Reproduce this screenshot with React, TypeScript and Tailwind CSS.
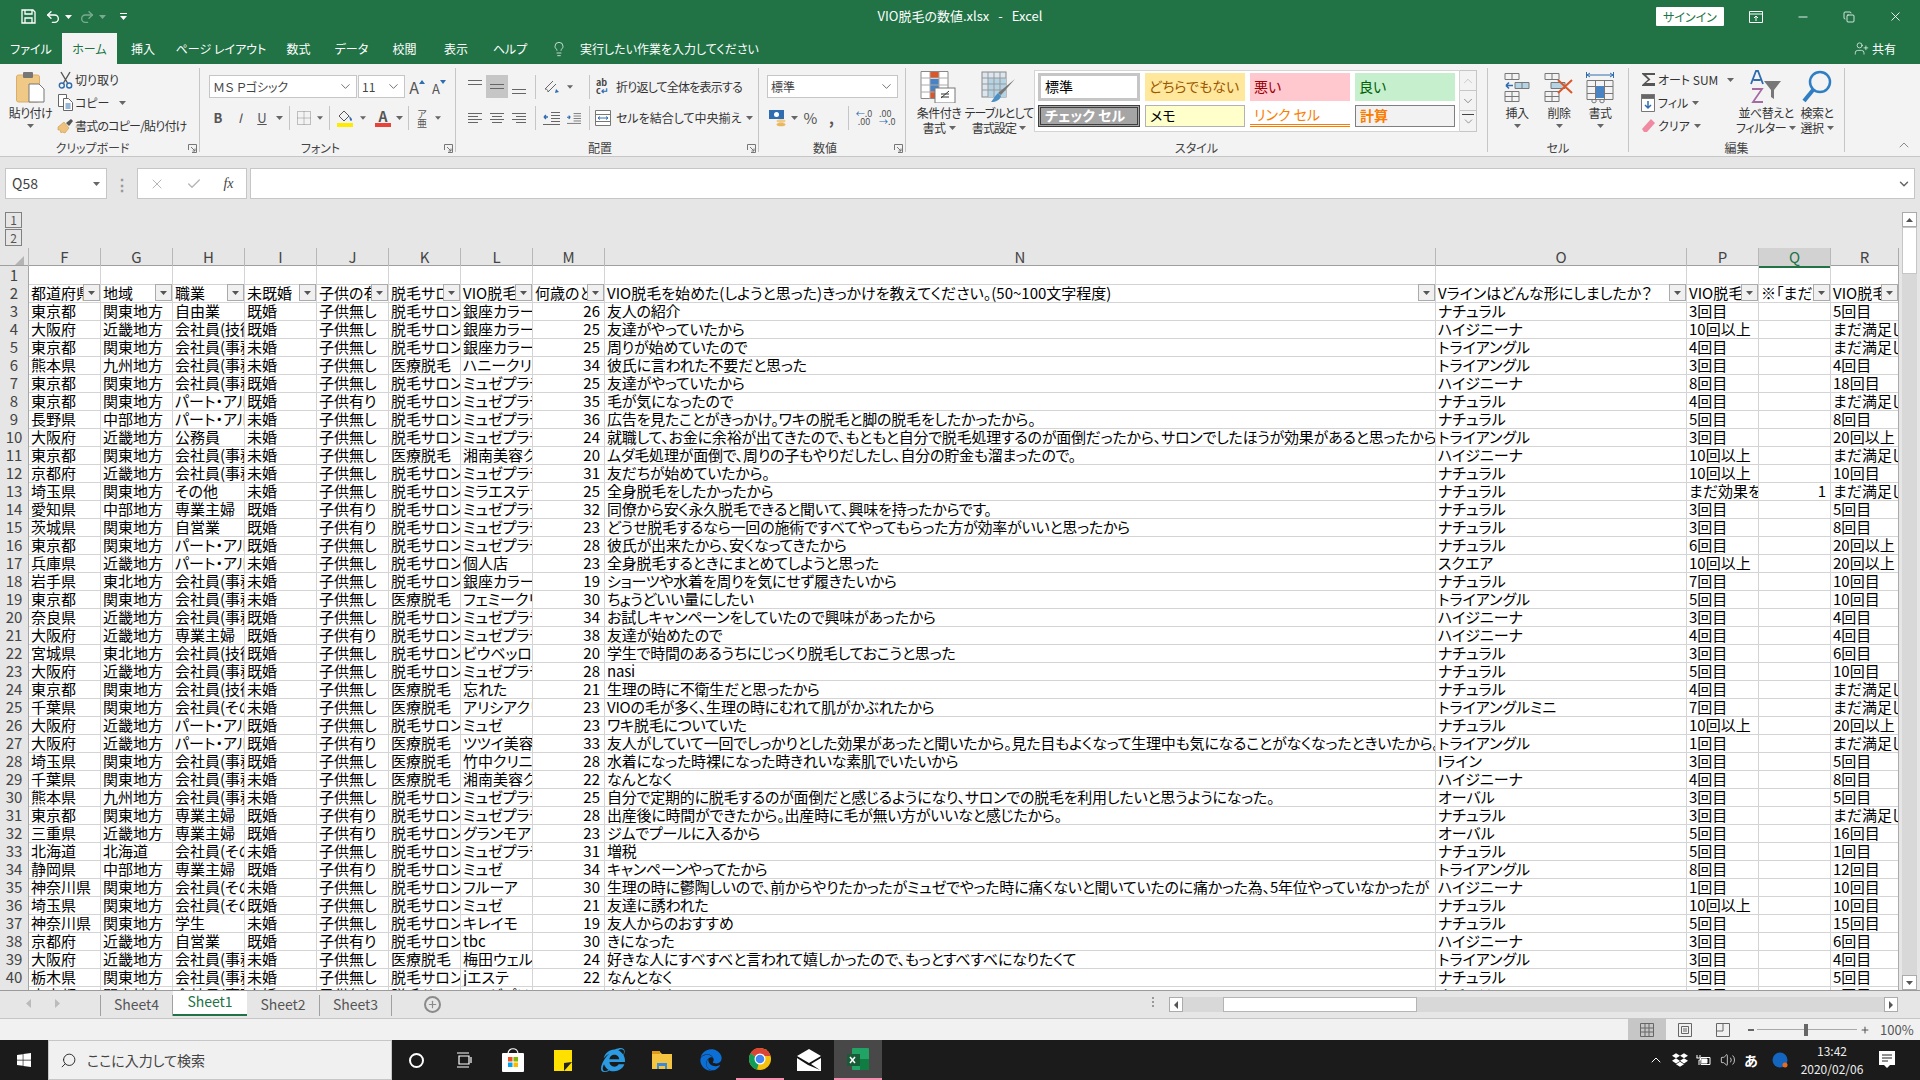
import React from 'react';
import { Undo2, Redo2, Minus, X, Copy, Lightbulb, UserPlus, Check, Plus, ChevronUp, ChevronDown, Volume2, Search } from 'lucide-react';
import { FaWindows, FaInternetExplorer, FaDropbox, FaEdge } from 'react-icons/fa';

const REGION: Record<string, string> = { 関: '関東地方', 近: '近畿地方', 九: '九州地方', 中: '中部地方', 東: '東北地方', 北: '北海道' };
const JOB: Record<string, string> = { j: '会社員(技術職)', m: '会社員(事務系)', o: '会社員(その他)', p: 'パート・アルバイト', h: '専業主婦' };
const STATE: Record<string, string> = { 既: '既婚', 未: '未婚' };
const CHILD: Record<string, string> = { 無: '子供無し', 有: '子供有り' };
const TYPE: Record<string, string> = { S: '脱毛サロン', M: '医療脱毛' };
const SHOP: Record<string, string> = { U: 'ミュゼプラチナム', G: '銀座カラー', Z: 'ミュゼ', C: '湘南美容クリニック' };
const SHAPE: Record<string, string> = { N: 'ナチュラル', H: 'ハイジニーナ', T: 'トライアングル', O: 'オーバル' };
const NOTYET = 'まだ満足していない';

const RAW = `東京都|関|自由業|既|無|S|G|26|友人の紹介|N|3回目||5回目
大阪府|近|j|既|無|S|銀座カラー、ミュゼ|25|友達がやっていたから|H|10回以上||X
東京都|関|m|未|無|S|G|25|周りが始めていたので|T|4回目||X
熊本県|九|m|未|無|M|ハニークリニック|34|彼氏に言われた不要だと思った|T|3回目||4回目
東京都|関|m|既|無|S|U|25|友達がやっていたから|H|8回目||18回目
東京都|関|p|既|有|S|U|35|毛が気になったので|N|4回目||X
長野県|中|p|未|無|S|U|36|広告を見たことがきっかけ。ワキの脱毛と脚の脱毛をしたかったから。|N|5回目||8回目
大阪府|近|公務員|未|無|S|U|24|就職して、お金に余裕が出てきたので、もともと自分で脱毛処理するのが面倒だったから、サロンでしたほうが効果があると思ったから。|T|3回目||20回以上
東京都|関|m|未|無|M|C|20|ムダ毛処理が面倒で、周りの子もやりだしたし、自分の貯金も溜まったので。|H|10回以上||X
京都府|近|m|未|無|S|U|31|友だちが始めていたから。|N|10回以上||10回目
埼玉県|関|その他|未|無|S|ミラエステシア|25|全身脱毛をしたかったから|N|まだ効果を感じていない|1|X
愛知県|中|h|既|有|S|U|32|同僚から安く永久脱毛できると聞いて、興味を持ったからです。|N|3回目||5回目
茨城県|関|自営業|既|有|S|U|23|どうせ脱毛するなら一回の施術ですべてやってもらった方が効率がいいと思ったから|N|3回目||8回目
東京都|関|p|既|無|S|U|28|彼氏が出来たから、安くなってきたから|N|6回目||20回以上
兵庫県|近|p|未|無|S|個人店|23|全身脱毛するときにまとめてしようと思った|スクエア|10回以上||20回以上
岩手県|東|m|未|無|S|G|19|ショーツや水着を周りを気にせず履きたいから|N|7回目||10回目
東京都|関|m|未|無|M|フェミークリニック|30|ちょうどいい量にしたい|T|5回目||10回目
奈良県|近|m|既|無|S|U|34|お試しキャンペーンをしていたので興味があったから|H|3回目||4回目
大阪府|近|h|既|有|S|U|38|友達が始めたので|H|4回目||4回目
宮城県|東|j|既|無|S|ビウベッロ|20|学生で時間のあるうちにじっくり脱毛しておこうと思った|N|3回目||6回目
大阪府|近|m|既|無|S|U|28|nasi|N|5回目||10回目
東京都|関|j|未|無|M|忘れた|21|生理の時に不衛生だと思ったから|N|4回目||X
千葉県|関|o|未|無|M|アリシアクリニック|23|VIOの毛が多く、生理の時にむれて肌がかぶれたから|トライアングルミニ|7回目||X
大阪府|近|p|既|無|S|Z|23|ワキ脱毛についていた|N|10回以上||20回以上
大阪府|近|p|既|有|M|ツツイ美容|33|友人がしていて一回でしっかりとした効果があったと聞いたから。見た目もよくなって生理中も気になることがなくなったときいたから。|T|1回目||X
埼玉県|関|m|既|無|M|竹中クリニック|28|水着になった時裸になった時きれいな素肌でいたいから|Iライン|3回目||5回目
千葉県|関|m|未|無|M|C|22|なんとなく|H|4回目||8回目
熊本県|九|m|未|無|S|U|25|自分で定期的に脱毛するのが面倒だと感じるようになり、サロンでの脱毛を利用したいと思うようになった。|O|3回目||5回目
東京都|関|h|既|有|S|U|28|出産後に時間ができたから。出産時に毛が無い方がいいなと感じたから。|N|3回目||X
三重県|近|h|既|有|S|グランモア|23|ジムでプールに入るから|O|5回目||16回目
北海道|北|o|未|無|S|U|31|増税|N|5回目||1回目
静岡県|中|h|既|有|S|Z|34|キャンペーンやってたから|T|8回目||12回目
神奈川県|関|o|未|無|S|フルーア|30|生理の時に鬱陶しいので、前からやりたかったがミュゼでやった時に痛くないと聞いていたのに痛かった為、5年位やっていなかったが|H|1回目||10回目
埼玉県|関|o|既|無|S|Z|21|友達に誘われた|N|10回以上||10回目
神奈川県|関|学生|未|無|S|キレイモ|19|友人からのおすすめ|N|5回目||15回目
京都府|近|自営業|既|有|S|tbc|30|きになった|H|3回目||6回目
大阪府|近|m|未|無|M|梅田ウェルエイジング|24|好きな人にすべすべと言われて嬉しかったので、もっとすべすべになりたくて|T|3回目||4回目
栃木県|関|m|未|無|S|jエステ|22|なんとなく|N|5回目||5回目
東京都|関|m|未|無|S|U|27|なんとなく|N|5回目||5回目`;

const ROWS = RAW.split('\n').map((line) => {
  const c = line.split('|');
  return [c[0], REGION[c[1]], JOB[c[2]] ?? c[2], STATE[c[3]], CHILD[c[4]], TYPE[c[5]], SHOP[c[6]] ?? c[6], c[7], c[8], SHAPE[c[9]] ?? c[9], c[10], c[11], c[12] === 'X' ? NOTYET : c[12]];
});

const HEADERS = ['都道府県', '地域', '職業', '未既婚', '子供の有無', '脱毛サロン', 'VIO脱毛', '何歳のとき', 'VIO脱毛を始めた(しようと思った)きっかけを教えてください。(50~100文字程度)', 'Vラインはどんな形にしましたか？', 'VIO脱毛', '※「まだ効果', 'VIO脱毛'];
const LETTERS = ['F', 'G', 'H', 'I', 'J', 'K', 'L', 'M', 'N', 'O', 'P', 'Q', 'R'];
const GRID = 'grid grid-cols-[29px_72px_72px_72px_72px_72px_72px_72px_72px_831px_251px_72px_72px_68px]';
const DOTS = 'bg-[radial-gradient(#dcdcdc_0.6px,transparent_0.6px)] bg-[length:4px_4px]';

const Caret = ({ color = '#666' }: { color?: string }) => (
  <svg width="7" height="4" viewBox="0 0 7 4"><path d="M0 0h7L3.5 4z" fill={color} /></svg>
);

const Launcher = () => (
  <svg width="9" height="9" viewBox="0 0 9 9" fill="none" stroke="#777"><path d="M.5 6V.5H8.5V8.5H4M3 3l4 4M7 4.5V7H4.5" /></svg>
);

const VSep = ({ c = 'h-[24px]' }: { c?: string }) => <div className={`w-px bg-[#c6c6c6] shrink-0 ${c}`} />;

const Lines = ({ rows, color = '#666' }: { rows: number[][]; color?: string }) => (
  <svg width="16" height="12" viewBox="0 0 16 12" stroke={color} strokeWidth="1">
    {rows.map((r, i) => <line key={i} x1={r[0]} x2={r[1]} y1={r[2] + 0.5} y2={r[2] + 0.5} />)}
  </svg>
);

const Group = ({ w, label, launcher, children }: { w: string; label: string; launcher?: boolean; children: React.ReactNode }) => (
  <div className={`flex h-full shrink-0 ${w}`}>
    <div className="flex-1 min-w-0 flex flex-col">
      <div className="h-[76px]">{children}</div>
      <div className="h-[16px] flex items-center text-[12px] text-[#444]">
        <div className="flex-1 text-center">{label}</div>
        {launcher && <div className="w-[14px] flex justify-center"><Launcher /></div>}
      </div>
    </div>
    <div className="w-px my-[4px] bg-[#c6c6c6]" />
  </div>
);

const Big = ({ c, icon, lines, caretInline }: { c: string; icon: React.ReactNode; lines: string[]; caretInline?: boolean }) => (
  <div className={`flex flex-col items-center shrink-0 text-[12px] leading-[15px] tracking-[-0.5px] text-[#333] ${c}`}>
    <div className="h-[32px] mt-[7px] mb-[2px] flex items-center justify-center">{icon}</div>
    {lines.map((l, i) => (
      <div key={l} className="whitespace-nowrap flex items-center gap-[3px]">
        {l}{caretInline && i === lines.length - 1 && <Caret />}
      </div>
    ))}
    {!caretInline && <div className="mt-[4px]"><Caret /></div>}
  </div>
);

const Combo = ({ c, text }: { c: string; text: string }) => (
  <div className={`h-[23px] bg-white border border-[#c6c6c6] flex items-center justify-between pl-[3px] pr-[3px] text-[12px] text-[#444] shrink-0 ${c}`}>
    <span>{text}</span>
    <ChevronDown size={15} strokeWidth={1.2} color="#444" />
  </div>
);

const PasteIcon = () => (
  <svg width="30" height="32" viewBox="0 0 30 32">
    <rect x="0.5" y="4" width="23" height="27" rx="2" fill="#f0c987" stroke="#d9ae68" />
    <rect x="7" y="1" width="10" height="6" rx="1" fill="#777" />
    <path d="M13 13h10l5 5v13H13z" fill="#fff" stroke="#777" />
  </svg>
);

const Scissors = () => (
  <svg width="15" height="18" viewBox="0 0 15 18" fill="none" strokeWidth="1.4">
    <path d="M3 1l6.5 11M12 1L5.500 12" stroke="#555" />
    <circle cx="3.800" cy="14.500" r="2.500" stroke="#2f6cb0" />
    <circle cx="11.200" cy="14.500" r="2.500" stroke="#2f6cb0" />
  </svg>
);

const CopyIcon = () => (
  <svg width="15" height="17" viewBox="0 0 15 17" fill="#fff" stroke="#666">
    <path d="M.5.500h8v12h-8z" />
    <path d="M5.500 4.500h5l4 4v8h-9z" />
    <path d="M7.500 10h5M7.500 12h5M7.500 14h5" stroke="#2f6cb0" />
  </svg>
);

const BrushIcon = () => (
  <svg width="17" height="16" viewBox="0 0 17 16">
    <path d="M1 9l6-5 5 6-4 5-3-1-1 1-1-3-2 0z" fill="#eec27c" stroke="#c99a52" strokeWidth=".6" />
    <path d="M9 5l5-4 2 2-4 5z" fill="#555" />
  </svg>
);

const AUp = ({ up }: { up: boolean }) => (
  <div className={`flex items-start leading-none text-[#555] ${up ? 'text-[16px]' : 'text-[13px] pt-[3px]'}`}>
    <span>A</span>
    <svg className={up ? 'mt-[1px]' : 'mt-[-2px]'} width="6" height="4" viewBox="0 0 6 4"><path d={up ? 'M0 4h6L3 0z' : 'M0 0h6L3 4z'} fill="#2f6cb0" /></svg>
  </div>
);

const BorderIcon = () => (
  <svg width="14" height="14" viewBox="0 0 14 14" fill="none" stroke="#888" strokeDasharray="1 1"><path d="M.5.500h13v13H.5zM7 .500v13M.5 7h13" /></svg>
);

const FillIcon = () => (
  <div className="flex flex-col items-center">
    <svg width="15" height="12" viewBox="0 0 15 12" fill="none"><path d="M6 1l5 5-5 5-5-5z" stroke="#555" /><path d="M11 6c2 1 3 3 3 4 0 1-2 1-2 0z" fill="#2f6cb0" /></svg>
    <div className="w-[16px] h-[4px] bg-[#ffeb00] mt-[1px]" />
  </div>
);

const FontColorIcon = () => (
  <div className="flex flex-col items-center font-bold text-[#555] text-[14px] leading-[12px]">
    <span>A</span>
    <div className="w-[16px] h-[4px] bg-[#e8423a] mt-[1px]" />
  </div>
);

const OrientIcon = () => (
  <svg width="18" height="16" viewBox="0 0 18 16" fill="none" stroke="#666"><path d="M2 10l8-8M5 13l8-8M2 10c2 0 3 1 3 3" /><path d="M13 10l3 3-4 1z" fill="#2f6cb0" stroke="none" /></svg>
);

const WrapIcon = () => (
  <div className="text-[9px] leading-[8px] text-[#444] font-bold w-[14px]">ab<br />c<span className="text-[#2f6cb0]">↵</span></div>
);

const MergeIcon = () => (
  <svg width="16" height="16" viewBox="0 0 16 16" fill="#fff" stroke="#777"><path d="M.5.500h15v15H.5zM.5 4.500h15M.5 11.500h15" /><path d="M3 8h10M3 8l2-1.500M3 8l2 1.500M13 8l-2-1.500M13 8l-2 1.500" stroke="#2f6cb0" /></svg>
);

const IndentIcon = ({ flip }: { flip?: boolean }) => (
  <svg width="17" height="13" viewBox="0 0 17 13" stroke="#666">
    <path d="M8 .500h9M8 3.500h9M8 6.500h9M8 9.500h9M0 12.500h17" />
    <path d={flip ? 'M0 5h4M4 5l-2-2M4 5l-2 2' : 'M5 5H1M1 5l2-2M1 5l2 2'} stroke="#2f6cb0" strokeWidth="1.4" fill="none" />
  </svg>
);

const CurrencyIcon = () => (
  <svg width="18" height="18" viewBox="0 0 18 18">
    <rect x="0" y="1" width="15" height="9" fill="#2f6cb0" />
    <circle cx="7.500" cy="5.500" r="2.500" fill="#fff" />
    <ellipse cx="12" cy="12" rx="4.500" ry="1.800" fill="#f0c987" />
    <ellipse cx="12" cy="15.500" rx="4.500" ry="1.800" fill="#eab75f" />
  </svg>
);

const CondIcon = () => (
  <svg width="38" height="32" viewBox="0 0 38 32" fill="#fff">
    <path d="M1 .500h27v27H1z" stroke="#888" />
    <rect x="10" y="1" width="9" height="6" fill="#d9572b" />
    <rect x="10" y="8" width="9" height="6" fill="#4a83c4" />
    <rect x="10" y="14" width="9" height="6" fill="#4a83c4" />
    <rect x="10" y="20" width="7" height="7" fill="#d9572b" />
    <path d="M1 7h27M1 14h27M1 21h27M10 1v27M19 1v27" stroke="#aaa" fill="none" />
    <rect x="15" y="17" width="20" height="15" fill="#fff" stroke="#777" />
    <path d="M21 27l8-7M21 23h8M21 26h8" stroke="#333" fill="none" />
  </svg>
);

const TableIcon = () => (
  <svg width="36" height="33" viewBox="0 0 36 33" fill="none">
    <rect x="1" y="1" width="24" height="25" fill="#dce6f0" stroke="#888" />
    <rect x="7" y="7" width="18" height="19" fill="#b4d3e4" />
    <path d="M1 7h24M1 13h24M1 19h24M7 1v25M13 1v25M19 1v25" stroke="#999" />
    <path d="M34 8L20 24l-3-2z" fill="#777" />
    <path d="M17 22l3 3c-1 4-5 6-10 6 2-2 3-5 7-9z" fill="#4a90c4" />
  </svg>
);

const InsertIcon = () => (
  <svg width="26" height="30" viewBox="0 0 26 30" fill="none" stroke="#777">
    <path d="M1 1.500h14v6H1zM8 1.500v6M1 19.500h14v10H1zM8 19.500v10M1 24.500h14" />
    <path d="M11 10.500h14v6H11zM18 10.500v6" fill="#b4d3e4" />
    <path d="M9 13.500H2M2 13.500l3-3M2 13.500l3 3" stroke="#2f6cb0" strokeWidth="1.600" />
  </svg>
);

const DeleteIcon = () => (
  <svg width="30" height="30" viewBox="0 0 30 30" fill="none" stroke="#777">
    <path d="M1 1.500h14v6H1zM8 1.500v6M1 19.500h14v10H1zM8 19.500v10M1 24.500h14" />
    <path d="M7 10.500h14v6H7z" fill="#b4d3e4" />
    <path d="M14 8l14 13M28 8L14 21" stroke="#d9572b" strokeWidth="2" />
  </svg>
);

const FormatIcon = () => (
  <svg width="28" height="34" viewBox="0 0 28 34" fill="none" stroke="#777">
    <path d="M1 5h26M1 5l3-2M1 5l3 2M27 5l-3-2M27 5l-3 2M.5 2v6M27.500 2v6" stroke="#2f6cb0" />
    <path d="M1 10.500h26v19H1zM9.500 10.500v19M18.500 10.500v19M1 16.500h26M1 23.500h26" />
    <rect x="10" y="16" width="8" height="12" fill="#4a83c4" stroke="none" />
    <path d="M6 30v2c0 1 4 1 4 0v-2M14 30v2c0 1 4 1 4 0v-2" />
  </svg>
);

const SigmaIcon = () => <svg width="15" height="15" viewBox="0 0 15 15"><path d="M14 4V1H1v1l6 5.500L1 13v1h13v-3H5l4.500-3.500L5 3h9z" fill="#555" /></svg>;

const FillDown = () => (
  <svg width="14" height="18" viewBox="0 0 14 18" fill="#fff" stroke="#777"><path d="M.5.500h13v17H.5z" /><path d="M.5.500h13v4H.5z" fill="#666" /><path d="M7 7v7M4 11l3 3 3-3" stroke="#2f6cb0" strokeWidth="1.500" fill="none" /></svg>
);

const Eraser = () => (
  <svg width="15" height="15" viewBox="0 0 15 15"><path d="M10 1l4 4-8 9H3l-2-3z" fill="#ef8aa0" /></svg>
);

const SortIcon = () => (
  <svg width="32" height="34" viewBox="0 0 32 34">
    <path d="M1 14L6 1h2l5 13M3.500 10h7" stroke="#2f6cb0" strokeWidth="1.800" fill="none" />
    <path d="M2 19h10L3 32h10" stroke="#a56aa0" strokeWidth="1.800" fill="none" />
    <path d="M14 11h17l-7 9v9l-3-2v-7z" fill="#777" />
  </svg>
);

const FindIcon = () => (
  <svg width="30" height="34" viewBox="0 0 30 34" fill="none" stroke="#2f7ec4"><circle cx="18" cy="12" r="10" strokeWidth="2.500" /><path d="M11 20L2 31" strokeWidth="4" /></svg>
);

const Clip = ({ icon, children }: { icon: React.ReactNode; children: React.ReactNode }) => (
  <div className="h-[23px] flex items-center text-[12px] text-[#333] whitespace-nowrap">
    <div className="w-[20px] flex justify-center shrink-0">{icon}</div>
    {children}
  </div>
);

const StyleCell = ({ c, children }: { c: string; children: string }) => (
  <div className={`flex items-center pl-[4px] pb-[2px] text-[14px] leading-[16px] whitespace-nowrap overflow-hidden ${c}`}>{children}</div>
);

const TitleBar = () => (
  <div className="h-[33px] bg-[#217346] grid grid-cols-[1fr_auto_1fr] items-center text-white shrink-0">
    <div className="flex items-center pl-[21px]">
      <svg width="15" height="15" viewBox="0 0 15 15" fill="none" stroke="#fff" strokeWidth="1.300"><path d="M1 1h11l2 2v11H1zM4 1v4h7V1M4 14V9h7v5" /></svg>
      <div className="ml-[9px]"><Undo2 size={16} strokeWidth={2} /></div>
      <div className="ml-[4px]"><Caret color="#fff" /></div>
      <div className="ml-[7px] opacity-40"><Redo2 size={16} strokeWidth={2} /></div>
      <div className="ml-[4px] opacity-40"><Caret color="#fff" /></div>
      <div className="ml-[14px] flex flex-col items-center gap-[2px]"><div className="w-[7px] h-px bg-white" /><Caret color="#fff" /></div>
    </div>
    <div className="text-[13px] pb-[2px]">VIO脱毛の数値.xlsx<span className="mx-[9px]">-</span>Excel</div>
    <div className="flex items-center justify-end">
      <div className="w-[68px] h-[19px] bg-white rounded-[1px] text-[#217346] text-[12px] flex items-center justify-center">サインイン</div>
      <svg className="ml-[25px]" width="14" height="12" viewBox="0 0 14 12" fill="none" stroke="#fff"><path d="M.5.500h13v11H.5zM.5 3h13M7 10V5M5 7l2-2 2 2" /></svg>
      <div className="ml-[33px]"><Minus size={14} strokeWidth={1.500} /></div>
      <div className="ml-[33px]"><Copy size={12} strokeWidth={1.600} /></div>
      <div className="ml-[33px] mr-[17px]"><X size={15} strokeWidth={1.400} /></div>
    </div>
  </div>
);

const TABS = [
  ['ファイル', 'w-[62px]'], ['ホーム', 'w-[55px]'], ['挿入', 'w-[52px]'], ['ページ レイアウト', 'w-[104px]'], ['数式', 'w-[51px]'],
  ['データ', 'w-[55px]'], ['校閲', 'w-[51px]'], ['表示', 'w-[52px]'], ['ヘルプ', 'w-[56px]'],
];

const TabBar = () => (
  <div className="h-[31px] bg-[#217346] flex items-stretch text-white text-[12px] shrink-0">
    {TABS.map(([t, w]) => (
      <div key={t} className={`${w} flex items-center justify-center ${t === 'ホーム' ? 'bg-[#f3f3f3] text-[#217346]' : ''}`}>{t}</div>
    ))}
    <div className="ml-[13px] flex items-center"><Lightbulb size={16} strokeWidth={1.100} /></div>
    <div className="ml-[13px] flex items-center">実行したい作業を入力してください</div>
    <div className="ml-auto mr-[24px] flex items-center gap-[3px]"><UserPlus size={15} strokeWidth={1.100} />共有</div>
  </div>
);

const Ribbon = () => (
  <div className="h-[93px] bg-[#f3f3f3] border-b border-[#c6c6c6] flex shrink-0 relative">
    <Group w="w-[200px]" label="クリップボード" launcher>
      <div className="flex">
        <Big c="w-[55px] ml-[3px] mr-[-3px]" icon={<PasteIcon />} lines={['貼り付け']} />
        <div className="pt-[4px]">
          <Clip icon={<Scissors />}>切り取り</Clip>
          <Clip icon={<CopyIcon />}>コピー<span className="ml-[10px]"><Caret /></span></Clip>
          <Clip icon={<BrushIcon />}><span className="tracking-[-0.8px]">書式のコピー/貼り付け</span></Clip>
        </div>
      </div>
    </Group>

    <Group w="w-[256px]" label="フォント" launcher>
      <div className="flex items-center pt-[11px] pl-[9px]">
        <Combo c="w-[148px]" text="ＭＳ Ｐゴシック" />
        <Combo c="w-[47px] ml-[1px]" text="11" />
        <div className="w-[22px] ml-[1px] flex justify-center"><AUp up /></div>
        <div className="w-[22px] flex justify-center"><AUp up={false} /></div>
      </div>
      <div className="flex items-center pl-[7px] mt-[8px] h-[24px] text-[#555]">
        <div className="w-[22px] text-center font-bold text-[13px]">B</div>
        <div className="w-[22px] text-center italic text-[13px]">I</div>
        <div className="w-[22px] text-center underline text-[13px]">U</div>
        <div className="w-[12px] flex justify-center"><Caret /></div>
        <div className="w-[4px]" /><VSep />
        <div className="w-[27px] flex justify-center"><BorderIcon /></div>
        <div className="w-[6px] flex justify-center"><Caret /></div>
        <div className="w-[6px]" /><VSep />
        <div className="w-[30px] flex justify-center"><FillIcon /></div>
        <div className="w-[6px] flex justify-center"><Caret /></div>
        <div className="w-[6px]" />
        <div className="w-[22px] flex justify-center"><FontColorIcon /></div>
        <div className="w-[10px] flex justify-center"><Caret /></div>
        <div className="w-[4px]" /><VSep />
        <div className="w-[26px] text-center text-[10px] leading-[9px]">ア<br />亜</div>
        <div className="w-[6px] flex justify-center"><Caret /></div>
      </div>
    </Group>

    <Group w="w-[303px]" label="配置" launcher>
      <div className="flex items-center pt-[11px] pl-[8px] h-[34px]">
        <div className="w-[22px] h-[23px] flex justify-center items-start pt-[3px]"><Lines rows={[[1, 15, 2], [1, 15, 6]]} /></div>
        <div className="w-[22px] h-[23px] flex justify-center items-center bg-[#c6c6c6]"><Lines rows={[[1, 15, 3], [1, 15, 7]]} /></div>
        <div className="w-[22px] h-[23px] flex justify-center items-end pb-[2px]"><Lines rows={[[1, 15, 5], [1, 15, 9]]} /></div>
        <div className="w-[5px]" /><VSep />
        <div className="w-[31px] flex justify-center"><OrientIcon /></div>
        <div className="w-[6px] flex justify-center"><Caret /></div>
        <div className="w-[16px]" /><VSep />
        <div className="w-[26px] flex justify-center"><WrapIcon /></div>
        <div className="text-[12px] text-[#333] whitespace-nowrap tracking-[-0.8px]">折り返して全体を表示する</div>
      </div>
      <div className="flex items-center pl-[8px] mt-[8px] h-[24px]">
        <div className="w-[22px] flex justify-center"><Lines rows={[[1, 15, 1], [1, 11, 4], [1, 15, 7], [1, 11, 10]]} /></div>
        <div className="w-[22px] flex justify-center"><Lines rows={[[1, 15, 1], [3, 13, 4], [1, 15, 7], [3, 13, 10]]} /></div>
        <div className="w-[22px] flex justify-center"><Lines rows={[[1, 15, 1], [5, 15, 4], [1, 15, 7], [5, 15, 10]]} /></div>
        <div className="w-[5px]" /><VSep />
        <div className="w-[31px] flex justify-center"><IndentIcon /></div>
        <div className="w-[14px] flex justify-center"><IndentIcon flip /></div>
        <div className="w-[8px]" /><VSep />
        <div className="w-[26px] flex justify-center"><MergeIcon /></div>
        <div className="text-[12px] text-[#333] whitespace-nowrap">セルを結合して中央揃え</div>
        <div className="ml-[5px]"><Caret /></div>
      </div>
    </Group>

    <Group w="w-[147px]" label="数値" launcher>
      <div className="pt-[11px] pl-[8px]"><Combo c="w-[131px]" text="標準" /></div>
      <div className="flex items-center pl-[8px] mt-[8px] h-[24px] text-[#555]">
        <div className="w-[22px] flex justify-center"><CurrencyIcon /></div>
        <div className="w-[10px] flex justify-center"><Caret /></div>
        <div className="w-[23px] text-center text-[15px]">%</div>
        <div className="w-[19px] text-center text-[15px] font-bold">,</div>
        <div className="w-[7px]" /><VSep />
        <div className="w-[30px] text-[9px] leading-[8px] text-center"><span className="text-[#2f6cb0]">←</span>.0<br />.00</div>
        <div className="w-[12px] text-[9px] leading-[8px] text-center whitespace-nowrap">.00<br /><span className="text-[#2f6cb0]">→</span>.0</div>
      </div>
    </Group>

    <Group w="w-[582px]" label="スタイル">
      <div className="flex pl-[3px]">
        <Big c="w-[60px]" icon={<CondIcon />} lines={['条件付き', '書式']} caretInline />
        <Big c="w-[60px] tracking-[-0.9px]" icon={<TableIcon />} lines={['テーブルとして', '書式設定']} caretInline />
        <div className="ml-[5px] mt-[6px] w-[426px] h-[62px] bg-white border border-[#d4d4d4] grid grid-cols-[102px_100px_100px_100px] grid-rows-[28px_22px] gap-x-[5px] gap-y-[4px] pl-[3px] pt-[2px]">
          <StyleCell c="border-[3px] border-[#c6c6c6] text-black">標準</StyleCell>
          <StyleCell c="bg-[#ffe79c] text-[#9c5700]">どちらでもない</StyleCell>
          <StyleCell c="bg-[#ffc7ce] text-[#9c0006]">悪い</StyleCell>
          <StyleCell c="bg-[#c6efce] text-[#006100]">良い</StyleCell>
          <StyleCell c="bg-[#a5a5a5] border-[3px] border-double border-[#3f3f3f] text-white font-bold">チェック セル</StyleCell>
          <StyleCell c="bg-[#ffffcc] border border-[#b2b2b2] text-black">メモ</StyleCell>
          <StyleCell c="border-b-[3px] border-double border-[#fa7d00] text-[#fa7d00]">リンク セル</StyleCell>
          <StyleCell c="bg-[#f2f2f2] border border-[#7f7f7f] text-[#fa7d00] font-bold">計算</StyleCell>
        </div>
        <div className="mt-[6px] w-[17px] h-[62px] flex flex-col border border-l-0 border-[#c6c6c6] bg-[#f3f3f3]">
          <div className="h-[20px] flex items-center justify-center border-b border-[#c6c6c6]"><ChevronUp size={14} strokeWidth={1} color="#aaa" /></div>
          <div className="h-[20px] flex items-center justify-center border-b border-[#c6c6c6]"><ChevronDown size={14} strokeWidth={1} color="#444" /></div>
          <div className="flex-1 flex flex-col items-center justify-center">
            <div className="w-[12px] h-px bg-[#444]" />
            <ChevronDown size={13} strokeWidth={1} color="#444" />
          </div>
        </div>
      </div>
    </Group>

    <Group w="w-[141px]" label="セル">
      <div className="flex pl-[8px]">
        <Big c="w-[42px]" icon={<InsertIcon />} lines={['挿入']} />
        <Big c="w-[42px]" icon={<DeleteIcon />} lines={['削除']} />
        <Big c="w-[40px]" icon={<FormatIcon />} lines={['書式']} />
      </div>
    </Group>

    <Group w="w-[216px]" label="編集">
      <div className="flex">
        <div className="w-[111px] pt-[4px] pl-[9px]">
          <Clip icon={<SigmaIcon />}>オート SUM<span className="ml-[9px]"><Caret /></span></Clip>
          <Clip icon={<FillDown />}>フィル<span className="ml-[4px]"><Caret /></span></Clip>
          <Clip icon={<Eraser />}>クリア<span className="ml-[4px]"><Caret /></span></Clip>
        </div>
        <Big c="w-[52px]" icon={<SortIcon />} lines={['並べ替えと', 'フィルター']} caretInline />
        <Big c="w-[50px]" icon={<FindIcon />} lines={['検索と', '選択']} caretInline />
      </div>
    </Group>

    <div className="ml-auto mr-[8px] self-end mb-[3px]"><ChevronUp size={16} strokeWidth={1} color="#555" /></div>
  </div>
);

const FormulaBar = () => (
  <div className={`h-[43px] bg-[#e6e6e6] flex pt-[11px] pb-px shrink-0 ${DOTS}`}>
    <div className="ml-[5px] w-[102px] bg-white border border-[#c6c6c6] flex items-center justify-between px-[6px] text-[14px] text-[#444]">
      Q58<Caret />
    </div>
    <div className="w-[30px] flex items-center justify-center text-[#999] text-[16px] font-bold leading-none">⋮</div>
    <div className="w-[110px] bg-white border border-[#c6c6c6] flex items-center">
      <div className="w-[38px] flex justify-center"><X size={16} strokeWidth={1.500} color="#b5b5b5" /></div>
      <div className="w-[35px] flex justify-center"><Check size={16} strokeWidth={2} color="#b5b5b5" /></div>
      <div className="w-[35px] text-center italic font-['Liberation_Serif',serif] text-[14px] text-[#444]">fx</div>
    </div>
    <div className="ml-[3px] w-[1665px] bg-white border border-[#c6c6c6] flex items-center justify-end pr-[3px]">
      <ChevronDown size={14} strokeWidth={2.500} color="#666" />
    </div>
  </div>
);

const Filter = () => (
  <div className="w-[17px] h-[17px] shrink-0 bg-[#f0f0f0] border border-[#ababab] flex items-center justify-center"><Caret color="#555" /></div>
);

const Sheet = () => (
  <div className="flex-1 flex flex-col min-h-0 min-w-0">
    <div className="h-[48px] shrink-0 pl-[5px] pt-[12px]">
      <div className="w-[17px] h-[16px] border border-[#808080] text-[12px] leading-[14px] text-center text-[#555]">1</div>
      <div className="w-[17px] h-[17px] mt-px border border-[#808080] text-[12px] leading-[15px] text-center text-[#555]">2</div>
    </div>
    <div className="flex-1 min-h-0 overflow-hidden border-r border-[#ababab] text-[15px] leading-[18px]">
      <div className={`${GRID} h-[18px] border-b border-[#9f9f9f] text-[#444]`}>
        <div className="border-r border-[#b8b8b8] flex items-end justify-end pr-[4px] pb-[3px]">
          <div className="w-0 h-0 border-l-[9px] border-l-transparent border-b-[9px] border-b-[#b4b4b4]" />
        </div>
        {LETTERS.map((l) => (
          <div key={l} className={`text-center border-r border-[#b8b8b8] ${l === 'Q' ? 'bg-[#d2d2d2] text-[#217346] border-b-2 border-b-[#217346]' : ''}`}>{l}</div>
        ))}
      </div>
      <div className={`${GRID} h-[18px] bg-white`}>
        <div className="bg-[#e6e6e6] text-center text-[#444] border-r border-b border-[#a6a6a6]">1</div>
        {LETTERS.map((l) => <div key={l} className="border-r border-b border-[#d4d4d4]" />)}
      </div>
      <div className={`${GRID} h-[18px] bg-white`}>
        <div className="bg-[#e6e6e6] text-center text-[#444] border-r border-b border-[#a6a6a6]">2</div>
        {HEADERS.map((h, j) => (
          <div key={j} className="border-r border-b border-[#d4d4d4] flex min-w-0">
            <div className="flex-1 min-w-0 overflow-hidden whitespace-nowrap pl-[2px] text-black">{h}</div>
            <Filter />
          </div>
        ))}
      </div>
      {ROWS.map((row, i) => (
        <div key={i} className={`${GRID} h-[18px] bg-white`}>
          <div className="bg-[#e6e6e6] text-center text-[#444] border-r border-b border-[#a6a6a6]">{i + 3}</div>
          {row.map((v, j) => (
            <div key={j} className={`border-r border-b border-[#d4d4d4] overflow-hidden whitespace-nowrap text-black ${j === 7 || j === 11 ? 'text-right pr-[4px]' : 'pl-[2px]'} ${j === 8 ? 'tracking-[-0.22px]' : ''}`}>{v}</div>
          ))}
        </div>
      ))}
    </div>
  </div>
);

const VScroll = () => (
  <div className="w-[21px] shrink-0 pl-[3px] pr-[3px] pt-[12px] flex flex-col">
    <div className="h-[15px] bg-white border border-[#ababab] flex items-center justify-center">
      <svg width="7" height="4" viewBox="0 0 7 4"><path d="M0 4h7L3.500 0z" fill="#555" /></svg>
    </div>
    <div className="flex-1 bg-[#d8d8d8] flex flex-col">
      <div className="h-[47px] bg-white border border-[#c6c6c6]" />
    </div>
    <div className="h-[15px] bg-white border border-[#ababab] flex items-center justify-center"><Caret color="#555" /></div>
  </div>
);

const SheetTabs = () => (
  <div className={`h-[28px] bg-[#e6e6e6] border-t border-[#9b9b9b] flex items-start shrink-0 text-[14px] text-[#555] ${DOTS}`}>
    <div className="w-[100px] h-[25px] flex items-center">
      <div className="ml-[26px]"><svg width="5" height="9" viewBox="0 0 5 9"><path d="M5 0v9L0 4.500z" fill="#bbb" /></svg></div>
      <div className="ml-[24px]"><svg width="5" height="9" viewBox="0 0 5 9"><path d="M0 0v9l5-4.500z" fill="#bbb" /></svg></div>
    </div>
    <div className="w-[73px] h-[21px] mt-[4px] pb-[2px] border-x border-[#a0a0a0] flex items-center justify-center">Sheet4</div>
    <div className="w-[74px] h-[25px] pb-[2px] bg-white border-b-2 border-[#217346] text-[#217346] flex items-center justify-center">Sheet1</div>
    <div className="w-[73px] h-[21px] mt-[4px] pb-[2px] border-r border-[#a0a0a0] flex items-center justify-center">Sheet2</div>
    <div className="w-[72px] h-[21px] mt-[4px] pb-[2px] border-r border-[#a0a0a0] flex items-center justify-center">Sheet3</div>
    <div className="ml-[32px] mt-[5px] w-[17px] h-[17px] rounded-full border-2 border-[#8a8a8a] flex items-center justify-center"><Plus size={11} strokeWidth={2.500} color="#8a8a8a" /></div>
    <div className="ml-[711px] mt-[6px] flex flex-col gap-[2px]">
      <div className="w-[2px] h-[2px] bg-[#999]" /><div className="w-[2px] h-[2px] bg-[#999]" /><div className="w-[2px] h-[2px] bg-[#999]" />
    </div>
    <div className="ml-[15px] mt-[6px] flex h-[15px] w-[729px]">
      <div className="w-[14px] bg-white border border-[#ababab] flex items-center justify-center"><svg width="4" height="8" viewBox="0 0 4 8"><path d="M4 0v8L0 4z" fill="#555" /></svg></div>
      <div className="flex-1 bg-[#d8d8d8] flex pl-[40px]"><div className="w-[194px] bg-white border border-[#b4b4b4]" /></div>
      <div className="w-[14px] bg-white border border-[#ababab] flex items-center justify-center"><svg width="4" height="8" viewBox="0 0 4 8"><path d="M0 0v8l4-4z" fill="#555" /></svg></div>
    </div>
  </div>
);

const StatusBar = () => (
  <div className="h-[22px] bg-[#f1f1f1] border-t border-[#c6c6c6] flex items-stretch shrink-0 text-[#555]">
    <div className="w-[1628px]" />
    <div className="w-[38px] bg-[#c6c6c6] flex items-center justify-center">
      <svg width="14" height="14" viewBox="0 0 14 14" fill="none" stroke="#666"><path d="M.5.500h13v13H.5zM5 .500v13M9 .500v13M.5 5h13M.5 9h13" /></svg>
    </div>
    <div className="w-[38px] flex items-center justify-center">
      <svg width="14" height="14" viewBox="0 0 14 14" fill="none" stroke="#666"><path d="M.5.500h13v13H.5zM3.500 3.500h7v7h-7zM5 6h4M5 8h4" /></svg>
    </div>
    <div className="w-[38px] flex items-center justify-center">
      <svg width="14" height="14" viewBox="0 0 14 14" fill="none" stroke="#666"><path d="M.5.500h13v13H.5zM7 .500V8H.5" /></svg>
    </div>
    <div className="ml-[3px] w-[12px] flex items-center justify-center"><div className="w-[6px] h-[2px] bg-[#666]" /></div>
    <div className="w-[100px] flex items-center relative">
      <div className="w-full h-px bg-[#aaa]" />
      <div className="absolute left-[47px] w-[4px] h-[12px] bg-[#666]" />
    </div>
    <div className="ml-[2px] w-[12px] flex items-center justify-center"><Plus size={10} strokeWidth={2.500} /></div>
    <div className="ml-[9px] text-[13px] flex items-center">100%</div>
  </div>
);

const TaskSlot = ({ c, children }: { c: string; children: React.ReactNode }) => (
  <div className={`h-full flex items-center justify-center shrink-0 ${c}`}>{children}</div>
);

const Taskbar = () => (
  <div className="h-[40px] bg-[#1b1b1b] flex items-stretch shrink-0 text-white">
    <TaskSlot c="w-[48px]"><FaWindows size={16} color="#fff" /></TaskSlot>
    <div className="w-[344px] bg-[#f0f0f0] border border-[#c6c6c6] flex items-center pl-[11px] text-[14px] text-[#444]">
      <Search size={17} strokeWidth={1.300} color="#222" className="-scale-x-100" />
      <span className="ml-[10px]">ここに入力して検索</span>
    </div>
    <TaskSlot c="w-[48px]"><div className="w-[15px] h-[15px] rounded-full border-[2.500px] border-white" /></TaskSlot>
    <TaskSlot c="w-[48px]">
      <svg width="16" height="16" viewBox="0 0 16 16" fill="none" stroke="#fff" strokeWidth="1.200"><path d="M3 4h10v8H3zM1 1h12M1 15h12M15 5v6" /></svg>
    </TaskSlot>
    <TaskSlot c="w-[50px]">
      <svg width="24" height="26" viewBox="0 0 24 26">
        <path d="M7 7c0-7 10-7 10 0" fill="none" stroke="#fff" strokeWidth="1.200" />
        <rect x="1" y="6" width="22" height="19" rx="1" fill="#fff" />
        <rect x="7" y="10" width="4.500" height="4.500" fill="#f25022" /><rect x="12.500" y="10" width="4.500" height="4.500" fill="#7fba00" />
        <rect x="7" y="15.500" width="4.500" height="4.500" fill="#00a4ef" /><rect x="12.500" y="15.500" width="4.500" height="4.500" fill="#ffb900" />
      </svg>
    </TaskSlot>
    <TaskSlot c="w-[50px]">
      <svg width="18" height="21" viewBox="0 0 18 21"><path d="M0 0h18v21H0z" fill="#ffe000" /><path d="M18 12L10 21V13z" fill="#222" /></svg>
    </TaskSlot>
    <TaskSlot c="w-[50px]"><FaInternetExplorer size={24} color="#2b9ae0" /></TaskSlot>
    <TaskSlot c="w-[48px]">
      <svg width="22" height="21" viewBox="0 0 22 21"><path d="M1 2h8l2 2h10v15H1z" fill="#f5c542" /><path d="M1 1h8v3H1z" fill="#e09a1a" /><path d="M6 13h10v6h-2v-3H8v3H6z" fill="#3a8bd8" /></svg>
    </TaskSlot>
    <TaskSlot c="w-[50px]"><FaEdge size={22} color="#0c6fd6" /></TaskSlot>
    <TaskSlot c="w-[48px] border-b-2 border-[#f48fb1]">
      <svg width="24" height="24" viewBox="0 0 24 24">
        <circle cx="12" cy="12" r="11" fill="#f4c20d" />
        <path d="M12 12L2.500 6.500A11 11 0 0 1 22.500 9H12z" fill="#db4437" />
        <path d="M12 12L2.500 6.500A11 11 0 0 0 9 22.600z" fill="#0f9d58" />
        <circle cx="12" cy="12" r="5.500" fill="#fff" /><circle cx="12" cy="12" r="4.300" fill="#4285f4" />
      </svg>
    </TaskSlot>
    <TaskSlot c="w-[50px]">
      <svg width="24" height="22" viewBox="0 0 24 22"><path d="M0 7L12 0l12 7v15H0z" fill="#fff" /><path d="M0 7l12 7 12-7v2L14 15l9 6-12-5-11-7z" fill="#111" /></svg>
    </TaskSlot>
    <TaskSlot c="w-[48px] bg-[#484848] border-b-2 border-[#f48fb1]">
      <svg width="24" height="24" viewBox="0 0 24 24">
        <rect x="6" y="1" width="17" height="22" rx="1" fill="#21a366" />
        <rect x="14" y="12" width="9" height="11" fill="#107c41" />
        <rect x="1" y="7" width="13" height="12" fill="#185c37" />
        <path d="M4 10l5 6M9 10l-5 6" stroke="#fff" strokeWidth="1.500" />
      </svg>
    </TaskSlot>
    <div className="flex-1 flex items-center justify-end pr-[18px]">
      <div className="w-[24px] flex justify-center"><ChevronUp size={16} strokeWidth={1.500} /></div>
      <div className="w-[24px] flex justify-center"><FaDropbox size={16} /></div>
      <div className="w-[24px] flex justify-center">
        <svg width="16" height="12" viewBox="0 0 16 12" fill="none" stroke="#fff"><path d="M5 3.500h9v7H5z" /><path d="M6 5h5v4H6z" fill="#fff" /><path d="M1 1v3M4 1v3M.5 4h4v2H3v5" /></svg>
      </div>
      <div className="w-[23px] flex justify-center"><Volume2 size={16} strokeWidth={1.100} /></div>
      <div className="w-[24px] text-center text-[14px] font-bold">あ</div>
      <div className="w-[5px]" />
      <div className="w-[24px] flex justify-center">
        <svg width="16" height="16" viewBox="0 0 16 16"><circle cx="8" cy="8" r="7.500" fill="#1465c0" /><circle cx="13" cy="13" r="2.500" fill="#e86a1c" /></svg>
      </div>
      <div className="w-[80px] text-center text-[12px] leading-[18px] text-[#eee]">13:42<br />2020/02/06</div>
      <div className="w-[30px] flex justify-center">
        <svg width="16" height="18" viewBox="0 0 16 18"><path d="M0 0h16v14h-5l-3 3-3-3H0z" fill="#fff" /><path d="M3 4h10M3 7h10M3 10h6" stroke="#222" /></svg>
      </div>
    </div>
  </div>
);

const App: React.FC = () => {
  return (
    <div className="w-[1920px] h-[1080px] flex flex-col overflow-hidden bg-[#e6e6e6] font-['Noto_Sans_CJK_JP','Liberation_Sans',sans-serif] [font-feature-settings:'palt']">
      <TitleBar />
      <TabBar />
      <Ribbon />
      <FormulaBar />
      <div className={`h-[790px] flex shrink-0 min-h-0 ${DOTS}`}>
        <Sheet />
        <VScroll />
      </div>
      <SheetTabs />
      <StatusBar />
      <Taskbar />
    </div>
  );
};

export default App;
